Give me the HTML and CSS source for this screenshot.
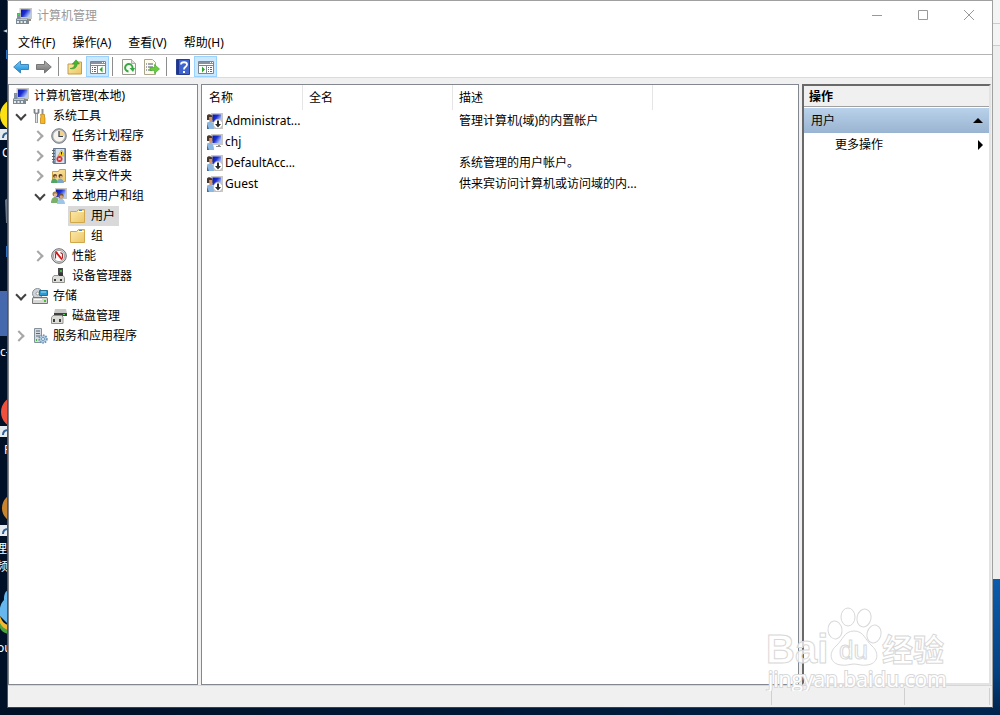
FILE: index.html
```html
<!DOCTYPE html>
<html lang="zh-CN">

<head>
    <meta charset="UTF-8">
    <meta name="viewport" content="width=device-width, initial-scale=1.0">
    <title>计算机管理</title>
    <link rel="stylesheet" href="styles.css">
</head>

<body>
    <!-- icon set -->
    <svg class="sprite" aria-hidden="true">
        <defs>
            <linearGradient id="g-screen" x1="0" y1="0" x2="1" y2="0.6">
                <stop offset="0" stop-color="#0a12a8" />
                <stop offset="0.5" stop-color="#1c30d0" />
                <stop offset="1" stop-color="#b4c8f8" />
            </linearGradient>
            <linearGradient id="g-folder" x1="0" y1="0" x2="1" y2="1">
                <stop offset="0" stop-color="#fdebb4" />
                <stop offset="1" stop-color="#ecc560" />
            </linearGradient>
            <linearGradient id="g-blue" x1="0" y1="0" x2="0" y2="1">
                <stop offset="0" stop-color="#7fd0fa" />
                <stop offset="1" stop-color="#0f87d4" />
            </linearGradient>
            <linearGradient id="g-grey" x1="0" y1="0" x2="0" y2="1">
                <stop offset="0" stop-color="#b5b5b5" />
                <stop offset="1" stop-color="#6e6e6e" />
            </linearGradient>
        </defs>
        <symbol id="i-computer" viewBox="0 0 16 16">
            <path d="M3.500 0H16v11H3.500z" fill="#c9c8c2" />
            <path d="M5 1.500h9.500V9H5z" fill="url(#g-screen)" />
            <path d="M1 5h3.500v6H1z" fill="#8290a0" />
            <path d="M2 6h1v1H2z" fill="#45e05b" />
            <path d="M0 10.500h12l1 1V16H0z" fill="#7b8995" />
            <path d="M1 11h10v1H1z" fill="#c1cad1" />
            <path d="M1 13h2v2H1zM4.500 13h2v2h-2zM8 13h2v2H8z" fill="#e4e9ec" />
            <path d="M12 11h3v2h-3z" fill="#8f8f8a" />
        </symbol>
        <symbol id="i-back" viewBox="0 0 16 16">
            <path d="M.7 8l6.800-6v3.500h8v5h-8V14z" fill="url(#g-blue)" stroke="#3c86bb" />
        </symbol>
        <symbol id="i-forward" viewBox="0 0 16 16">
            <path d="M15.300 8L8.500 2v3.500h-8v5h8V14z" fill="url(#g-grey)" stroke="#777" />
        </symbol>
        <symbol id="i-up" viewBox="0 0 16 16">
            <path d="M1 5h6l1-2h6.500v12H1z" fill="url(#g-folder)" stroke="#c69b45" />
            <path d="M3 9.500C7 9 7.500 7 7.500 5H5.300L9 .8 12.500 5h-2.300C10 9 7 10.500 3 9.500z" fill="#43b72f" stroke="#268e1c" stroke-width=".5" />
        </symbol>
        <symbol id="i-pane-left" viewBox="0 0 16 16">
            <path d="M.5 2.500h15v12H.5z" fill="#fff" stroke="#7d8590" />
            <path d="M1 3h14v2H1z" fill="#8791a0" />
            <path d="M12 3h1v1h-1zM14 3h1v1h-1z" fill="#fff" />
            <path d="M0 6.500h16M7.500 7v7" stroke="#7d8590" />
            <path d="M2 8.500h1M2 10.500h1M2 12.500h1M4 8.500h2M4 10.500h2M4 12.500h2" stroke="#3e6cae" />
            <path d="M12.500 7.500v6l-3-3z" fill="#2ba52b" />
        </symbol>
        <symbol id="i-pane-right" viewBox="0 0 16 16">
            <path d="M.5 2.500h15v12H.5z" fill="#fff" stroke="#7d8590" />
            <path d="M1 3h14v2H1z" fill="#8791a0" />
            <path d="M12 3h1v1h-1zM14 3h1v1h-1z" fill="#fff" />
            <path d="M0 6.500h16M8.500 7v7" stroke="#7d8590" />
            <path d="M10 8.500h1M10 10.500h1M10 12.500h1M12 8.500h2M12 10.500h2M12 12.500h2" stroke="#3e6cae" />
            <path d="M4 7.500v6l3-3z" fill="#2ba52b" />
        </symbol>
        <symbol id="i-refresh" viewBox="0 0 16 16">
            <path d="M1.500.5h9l4 4v11h-13z" fill="#fbfbf5" stroke="#9a9a90" />
            <path d="M10.500.5v4h4" fill="#ddd" stroke="#9a9a90" stroke-width=".7" />
            <path d="M7.500 12.500A3.700 3.700 0 1 1 11.500 9" fill="none" stroke="#36a842" stroke-width="2" />
            <path d="M8.500 9H14l-2 4z" fill="#36a842" />
        </symbol>
        <symbol id="i-export" viewBox="0 0 16 16">
            <path d="M.5.500h8l3 3v12H.5z" fill="#fdfbe9" stroke="#aaa58c" />
            <path d="M2 5h1M2 8h1M2 11h1M4 5h5M4 8h5M4 11h4" stroke="#4c5573" />
            <path d="M6 8.500h4.500V5.500l5 4.500-5 4.500v-3H6z" fill="#68cc3d" stroke="#45a329" stroke-width=".6" />
        </symbol>
        <symbol id="i-help" viewBox="0 0 16 16">
            <path d="M1.500.5h13v15h-13z" fill="#3f64cf" stroke="#263f91" />
            <path d="M2 1h2v14H2z" fill="#1e3690" />
            <path d="M6 5.500C6 2.500 12 2.500 12 5.500 12 8 9 7.500 9 10.500" fill="none" stroke="#fff" stroke-width="1.800" />
            <path d="M8 12h2v2H8z" fill="#fff" />
        </symbol>
        <symbol id="i-tools" viewBox="0 0 16 16">
            <path d="M2.500 1v3.500l2 1.500 2-1.500V1" fill="none" stroke="#7d8386" stroke-width="1.800" />
            <path d="M4.500 5.500V15" stroke="#8a9093" stroke-width="2.800" />
            <path d="M4.500 6V14.500" stroke="#dfe3e4" stroke-width="1" />
            <path d="M9.500 1h2v5h-2z" fill="#8c9499" />
            <path d="M8.500 6.500h4V9l.5 1v5.500H8.500V10l.5-1z" fill="#f5b822" stroke="#b87d10" stroke-width=".7" />
        </symbol>
        <symbol id="i-clock" viewBox="0 0 16 16">
            <circle cx="8" cy="8" r="7.300" fill="#a9afb5" stroke="#7b8086" />
            <circle cx="8" cy="8" r="5.700" fill="#f6f4ec" />
            <path d="M8 2.300A5.700 5.700 0 0 1 13.700 8H8z" fill="#f3d28e" />
            <path d="M8 3v5.500h4" fill="none" stroke="#39424e" stroke-width="1.200" />
        </symbol>
        <symbol id="i-event" viewBox="0 0 16 16">
            <path d="M2.500.5h12v15h-12z" fill="#8fa4bf" stroke="#66778f" />
            <path d="M5 1h8v14H5z" fill="#d6e0ef" />
            <path d="M1 2.500h3M1 5.500h3M1 8.500h3M1 11.500h3M1 14h3" stroke="#5a6673" />
            <path d="M10.500 2l3.500 6H7z" fill="#f8d420" stroke="#a98a14" stroke-width=".5" />
            <path d="M10 4h1v2.500h-1z" fill="#222" />
            <circle cx="8.500" cy="11" r="3" fill="#d92c2c" />
            <path d="M7.300 9.800l2.400 2.400M9.700 9.800l-2.400 2.400" stroke="#fff" />
        </symbol>
        <symbol id="i-share" viewBox="0 0 16 16">
            <path d="M1.500 3.500h6l1-2h6v12h-13z" fill="url(#g-folder)" stroke="#c99f45" />
            <circle cx="4" cy="8" r="2" fill="#6c4428" />
            <circle cx="9.500" cy="8" r="2" fill="#5a3a25" />
            <circle cx="4.500" cy="9" r="1.200" fill="#e0ac80" />
            <circle cx="10" cy="9" r="1.200" fill="#e0ac80" />
            <path d="M0 15c0-6 6-6 7 0z" fill="#52a562" />
            <path d="M6 15c0-6 6-6 7 0z" fill="#7ba6c5" />
        </symbol>
        <symbol id="i-users" viewBox="0 0 16 16">
            <path d="M4 0h12v11H4z" fill="#c9c8c2" />
            <path d="M5 1.500h9.500V9H5z" fill="url(#g-screen)" />
            <circle cx="4" cy="6" r="2.500" fill="#a07d4b" />
            <circle cx="4.500" cy="7" r="1.700" fill="#e5b78c" />
            <circle cx="10" cy="8" r="2.500" fill="#6b523b" />
            <circle cx="10.300" cy="9" r="1.700" fill="#d9a27c" />
            <path d="M0 15c0-8 8-8 8 0z" fill="#7bb06a" />
            <path d="M6 16c0-7 8-7 8 0z" fill="#9cc6e8" />
        </symbol>
        <symbol id="i-folder" viewBox="0 0 16 16">
            <path d="M.5 3.500h6l2-2h6v13H.5z" fill="url(#g-folder)" stroke="#d1a74c" />
            <path d="M8 3.500h6" stroke="#fff" />
            <path d="M9 2.500h3" stroke="#4a90d8" />
        </symbol>
        <symbol id="i-perf" viewBox="0 0 16 16">
            <circle cx="8" cy="8" r="7.300" fill="#dadada" stroke="#6c6c6c" />
            <circle cx="8" cy="8" r="5.600" fill="#fff" stroke="#888" stroke-width=".7" />
            <path d="M4.500 10.500V6l2-1.500M11.500 10.500V6l-2-1.500" fill="none" stroke="#a02a2a" stroke-width="1.200" />
            <path d="M4.500 3.500l6.500 8" stroke="#d51414" stroke-width="1.800" />
        </symbol>
        <symbol id="i-device" viewBox="0 0 16 16">
            <path d="M7 0h5v9H7z" fill="#4b4b4b" />
            <path d="M9 2h2v2H9z" fill="#43b844" />
            <path d="M1.500 9.500l1.500-2h9l1.500 2v5h-12z" fill="#dddddb" stroke="#92928e" />
            <path d="M3 11h2v2H3zM9 11h2v2H9z" fill="#3d3d3d" />
            <path d="M8 5h4v3H8z" fill="#373737" />
        </symbol>
        <symbol id="i-storage" viewBox="0 0 16 16">
            <circle cx="5.500" cy="5.500" r="5" fill="#cdd5d9" stroke="#858e94" />
            <circle cx="5.500" cy="5.500" r="1.500" fill="#fff" stroke="#999" />
            <path d="M7.500 2.500h8v5h-8z" fill="#2d9bd1" stroke="#286e93" />
            <path d="M9 3.500h5v1H9z" fill="#a8def5" />
            <path d="M1 9.500h14l.500 1.500v4.500H.5V11z" fill="#d7d8d6" stroke="#747775" />
            <path d="M2 11.500h8" stroke="#fff" />
            <path d="M12 12h2v2h-2z" fill="#3cc52b" />
        </symbol>
        <symbol id="i-disk" viewBox="0 0 16 16">
            <path d="M4 1h11l1 4H3z" fill="#c7c8c6" />
            <path d="M3 5h13v3H3z" fill="#3e4240" />
            <path d="M12 6h2v1h-2z" fill="#51da54" />
            <path d="M.5 9.500L2 7.500h9l1 2v6H.5z" fill="#deded9" stroke="#92928e" />
            <path d="M2 11h2v3H2zM8 11h2v3H8z" fill="#3d3d3d" />
        </symbol>
        <symbol id="i-services" viewBox="0 0 16 16">
            <path d="M2.500.500h7v14h-7z" fill="#d5dbe0" stroke="#85929c" />
            <path d="M4 3h4M4 5.500h4M4 8h4" stroke="#5c6873" />
            <path d="M4 12h1" stroke="#3cb43a" stroke-width="2" />
            <circle cx="11" cy="11" r="3.800" fill="#b8d4ea" stroke="#6c92b0" stroke-width="1.800" stroke-dasharray="1.500 1" />
            <circle cx="11" cy="11" r="1.500" fill="#fff" stroke="#6c92b0" />
        </symbol>
        <symbol id="i-user" viewBox="0 0 16 16">
            <path d="M4 0h12v11H4z" fill="#c9c8c2" />
            <path d="M5.500 1.500H14V9H5.500z" fill="url(#g-screen)" />
            <path d="M9 12h5v1H9zM11 11h2v1h-2z" fill="#8a8c90" />
            <path d="M0 2.500C1 .5 5 .5 5.500 4v3H0z" fill="#4a382c" />
            <path d="M2 4h3v5H2.500z" fill="#d69467" />
            <path d="M0 16V9.500c4-2 7 0 7 6.500z" fill="#8cb7e2" />
            <path d="M0 16v-5l2 5z" fill="#426d9f" />
        </symbol>
        <symbol id="i-user-off" viewBox="0 0 16 16">
            <path d="M4 0h12v16H7z" fill="#c9c8c2" />
            <use href="#i-user" width="16" height="16" />
            <circle cx="11" cy="11" r="4.700" fill="#fff" stroke="#a9a9a9" stroke-width=".7" />
            <path d="M10 7.500h2V11h2l-3 3.500L8 11h2z" fill="#2b2b2b" />
        </symbol>
    </svg>

    <!-- the part of the desktop that shows left of the window -->
    <svg class="desktop-icons" width="8" height="715" aria-hidden="true">
        <path d="M3 31l5-2v4z" fill="#ccd4dc" />
        <path d="M6 50h2v9H6zM6 246h2v11H6z" fill="#3273c0" />
        <circle cx="16" cy="115" r="16" fill="#fbe111" />
        <path d="M5 200l3-2v25H6z" fill="#6c7988" />
        <path d="M0 291h8v45H0z" fill="#4569ac" />
        <circle cx="17" cy="412" r="16" fill="#f0513c" />
        <circle cx="17" cy="508" r="15" fill="#c98430" />
        <path d="M8 590C4 592 4 597 4 600c-4 4-5 10-4 16l8 8z" fill="#65b7ee" />
        <path d="M0 616c2 6 5 8 8 9v8c-4-1-7-4-8-8z" fill="#f5b72b" />
        <path d="M0 623c2 4 5 6 8 7v4c-4-1-7-3-8-6z" fill="#4aa33f" />
        <path d="M0 129h8v11H0zM0 426h8v11H0zM0 525h8v11H0z" fill="#e6ebf0" />
        <path d="M3 138c0-4 2-5 5-5M3 435c0-4 2-5 5-5M3 534c0-4 2-5 5-5" fill="none" stroke="#2c5f98" stroke-width="2" />
        <g class="desktop-label">
            <text x="2" y="157">C</text>
            <text x="0" y="356">c-</text>
            <text x="4" y="454">F</text>
            <text x="-5" y="553">理</text>
            <text x="-4" y="571">频</text>
            <text x="-3" y="652">ou</text>
        </g>
    </svg>

    <div class="window">
        <header class="title-bar">
            <svg class="icon"><use href="#i-computer" /></svg>
            <h1>计算机管理</h1>
            <div class="window-buttons">
                <button type="button" aria-label="最小化"><svg viewBox="0 0 12 12"><path d="M1 5.500h10" /></svg></button>
                <button type="button" aria-label="最大化"><svg viewBox="0 0 12 12"><path d="M1.500.5h9v9h-9z" /></svg></button>
                <button type="button" aria-label="关闭"><svg viewBox="0 0 12 12"><path d="M1 0l10 10M11 0L1 10" /></svg></button>
            </div>
        </header>

        <nav class="menu-bar">
            <button type="button">文件(F)</button>
            <button type="button">操作(A)</button>
            <button type="button">查看(V)</button>
            <button type="button">帮助(H)</button>
        </nav>

        <div class="tool-bar">
            <button type="button" aria-label="后退"><svg class="icon"><use href="#i-back" /></svg></button>
            <button type="button" aria-label="前进"><svg class="icon"><use href="#i-forward" /></svg></button>
            <span class="sep"></span>
            <button type="button" aria-label="上移一级"><svg class="icon"><use href="#i-up" /></svg></button>
            <button type="button" class="on" aria-label="显示控制台树"><svg class="icon"><use href="#i-pane-left" /></svg></button>
            <span class="sep"></span>
            <button type="button" aria-label="刷新"><svg class="icon"><use href="#i-refresh" /></svg></button>
            <button type="button" aria-label="导出列表"><svg class="icon"><use href="#i-export" /></svg></button>
            <span class="sep"></span>
            <button type="button" aria-label="帮助"><svg class="icon"><use href="#i-help" /></svg></button>
            <button type="button" class="on" aria-label="显示操作窗格"><svg class="icon"><use href="#i-pane-right" /></svg></button>
        </div>

        <main class="panes">
            <section class="pane tree">
                <div class="row"><span class="node"><svg class="icon"><use href="#i-computer" /></svg>计算机管理(本地)</span></div>
                <ul>
                    <li>
                        <div class="row"><button type="button" class="toggle open" aria-label="折叠"></button><span class="node"><svg class="icon"><use href="#i-tools" /></svg>系统工具</span></div>
                        <ul>
                            <li class="row"><button type="button" class="toggle" aria-label="展开"></button><span class="node"><svg class="icon"><use href="#i-clock" /></svg>任务计划程序</span></li>
                            <li class="row"><button type="button" class="toggle" aria-label="展开"></button><span class="node"><svg class="icon"><use href="#i-event" /></svg>事件查看器</span></li>
                            <li class="row"><button type="button" class="toggle" aria-label="展开"></button><span class="node"><svg class="icon"><use href="#i-share" /></svg>共享文件夹</span></li>
                            <li>
                                <div class="row"><button type="button" class="toggle open" aria-label="折叠"></button><span class="node"><svg class="icon"><use href="#i-users" /></svg>本地用户和组</span></div>
                                <ul>
                                    <li class="row leaf"><span class="node selected"><svg class="icon"><use href="#i-folder" /></svg>用户</span></li>
                                    <li class="row leaf"><span class="node"><svg class="icon"><use href="#i-folder" /></svg>组</span></li>
                                </ul>
                            </li>
                            <li class="row"><button type="button" class="toggle" aria-label="展开"></button><span class="node"><svg class="icon"><use href="#i-perf" /></svg>性能</span></li>
                            <li class="row leaf"><span class="node"><svg class="icon"><use href="#i-device" /></svg>设备管理器</span></li>
                        </ul>
                    </li>
                    <li>
                        <div class="row"><button type="button" class="toggle open" aria-label="折叠"></button><span class="node"><svg class="icon"><use href="#i-storage" /></svg>存储</span></div>
                        <ul>
                            <li class="row leaf"><span class="node"><svg class="icon"><use href="#i-disk" /></svg>磁盘管理</span></li>
                        </ul>
                    </li>
                    <li class="row"><button type="button" class="toggle" aria-label="展开"></button><span class="node"><svg class="icon"><use href="#i-services" /></svg>服务和应用程序</span></li>
                </ul>
            </section>

            <section class="pane list">
                <table>
                    <thead>
                        <tr>
                            <th class="c-name">名称</th>
                            <th class="c-full">全名</th>
                            <th class="c-desc">描述</th>
                        </tr>
                    </thead>
                    <tbody>
                        <tr>
                            <td><svg class="icon"><use href="#i-user-off" /></svg>Administrat...</td>
                            <td></td>
                            <td>管理计算机(域)的内置帐户</td>
                        </tr>
                        <tr>
                            <td><svg class="icon"><use href="#i-user" /></svg>chj</td>
                            <td></td>
                            <td></td>
                        </tr>
                        <tr>
                            <td><svg class="icon"><use href="#i-user-off" /></svg>DefaultAcc...</td>
                            <td></td>
                            <td>系统管理的用户帐户。</td>
                        </tr>
                        <tr>
                            <td><svg class="icon"><use href="#i-user-off" /></svg>Guest</td>
                            <td></td>
                            <td>供来宾访问计算机或访问域的内...</td>
                        </tr>
                    </tbody>
                </table>
            </section>

            <aside class="actions">
                <h2>操作</h2>
                <button type="button" class="group">用户<span class="arrow up"></span></button>
                <button type="button" class="more">更多操作<span class="arrow right"></span></button>
            </aside>
        </main>

        <footer class="status-bar">
            <span class="s-main"></span>
            <span class="s-mid"></span>
            <span class="s-end"></span>
        </footer>
    </div>

    <svg class="watermark" width="190" height="92" viewBox="0 0 190 92">
        <g>
            <ellipse cx="86" cy="18" rx="7" ry="9" />
            <ellipse cx="102" cy="19" rx="7" ry="9" transform="rotate(12 102 19)" />
            <ellipse cx="73" cy="31" rx="7" ry="9" transform="rotate(-8 73 31)" />
            <ellipse cx="112" cy="35" rx="7" ry="9" transform="rotate(14 112 35)" />
            <path d="M92 32c-10 0-11 9-18 15-8 7-6 18 5 19 5 1 9-1 13-1s8 2 13 1c11-1 13-12 5-19-7-6-8-15-18-15z" />
        </g>
        <text class="wm-bai" x="4" y="64">Bai</text>
        <text class="wm-du" x="77" y="60">du</text>
        <text class="wm-jy" x="120" y="62">经验</text>
        <text class="wm-url" x="6" y="88">jingyan.baidu.com</text>
    </svg>
</body>

</html>
```
FILE: styles.css
```css
* {
    box-sizing: border-box;
}

body {
    margin: 0;
    height: 100vh;
    padding: 0 7px 7px;
    overflow: hidden;
    position: relative;
    font-family: "Noto Sans", "Noto Sans CJK SC", sans-serif;
    font-size: 12px;
    line-height: 20px;
    color: #000;
    background:
        linear-gradient(#f4f4f4 0 23px, #ccc 23px 24px, #f4f4f4 24px 45px, #ccc 45px 46px, #eee 46px) right top / 7px 579px no-repeat,
        linear-gradient(#0a5cad, #04407f 70%, #00234b) right bottom / 7px calc(100% - 579px) no-repeat,
        linear-gradient(90deg, #001026, #001a3a 60%, #00264f);
}

button {
    margin: 0;
    padding: 0;
    border: 0;
    background: none;
    font: inherit;
    color: inherit;
}

h1,
h2 {
    margin: 0;
    font-size: 12px;
    font-weight: normal;
}

ul {
    list-style: none;
    margin: 0;
    padding: 0;
}

.sprite {
    position: absolute;
    width: 0;
    height: 0;
}

.icon {
    width: 16px;
    height: 16px;
    flex: none;
}

.desktop-icons {
    position: absolute;
    left: 0;
    top: 0;
}

.desktop-label {
    fill: #fff;
    font-size: 12px;
}

.window {
    position: relative;
    height: 100%;
    display: flex;
    flex-direction: column;
    background: #f0f0f0;
    border: 1px solid #a0a0a0;
    border-left-color: #4d5564;
    border-bottom-color: #36434f;
}

/* title, menu and tool bar */
.title-bar {
    height: 30px;
    padding-left: 8px;
    display: flex;
    align-items: center;
    gap: 5px;
    background: #fff;
    color: #999;
}

.window-buttons {
    margin-left: auto;
    height: 100%;
    display: flex;
}

.window-buttons button {
    width: 46px;
    display: flex;
    align-items: center;
    justify-content: center;
}

.window-buttons svg {
    width: 12px;
    height: 12px;
    fill: none;
    stroke: #999;
}

.menu-bar {
    height: 24px;
    padding-left: 10px;
    display: flex;
    gap: 17px;
    background: #fff;
    border-bottom: 1px solid #b4b4b4;
}

.tool-bar {
    height: 23px;
    padding: 1px 0 0 1px;
    display: flex;
    background: #fff;
    border-bottom: 1px solid #dcdcdc;
}

.tool-bar button {
    width: 23px;
    display: flex;
    align-items: center;
    justify-content: center;
}

.tool-bar .on {
    background: #cce8ff;
    border: 1px solid #99d1ff;
}

.tool-bar .sep {
    width: 1px;
    margin: 1px 4px 1px 3px;
    background: #8d8d8d;
}

/* the three panes */
.panes {
    flex: 1;
    min-height: 0;
    display: flex;
    gap: 3px;
    padding: 6px 1px 0 0;
}

.pane {
    background: #fff;
    border: 1px solid #828790;
}

.tree {
    width: 190px;
    padding: 1px 2px;
}

.tree > ul {
    padding-left: 2px;
}

.tree ul ul {
    padding-left: 19px;
}

.row {
    height: 20px;
    display: flex;
}

.leaf {
    padding-left: 17px;
}

.node {
    display: flex;
    align-items: center;
    gap: 5px;
    padding: 0 4px 0 2px;
    white-space: nowrap;
}

.selected {
    background: #d9d9d9;
}

.toggle {
    width: 16px;
    margin-right: 1px;
    padding-right: 4px;
    display: flex;
    align-items: center;
    justify-content: center;
}

.toggle::before {
    content: "";
    width: 6px;
    height: 6px;
    border: solid #a6a6a6;
    border-width: 2px 2px 0 0;
    transform: rotate(45deg);
}

.toggle.open {
    padding: 0 1px 3px 0;
}

.toggle.open::before {
    border-color: #404040;
    transform: rotate(135deg);
}

.list {
    flex: 1;
    min-width: 0;
}

.list table {
    border-spacing: 0;
    table-layout: fixed;
    width: 451px;
}

.list th {
    height: 25px;
    padding: 0 6px;
    text-align: left;
    font-weight: normal;
    border-right: 1px solid #e5e5e5;
}

.list th:first-child {
    padding-left: 7px;
}

.c-name {
    width: 101px;
}

.c-full {
    width: 150px;
}

.c-desc {
    width: 200px;
}

.list td {
    height: 21px;
    padding: 0 6px;
    white-space: nowrap;
}

.list td:first-child {
    padding: 0 0 0 5px;
}

.list td .icon {
    margin-right: 2px;
    vertical-align: middle;
}

.actions {
    width: 189px;
    background: #fff;
    border: 2px solid;
    border-color: #696969 #e3e3e3 #e3e3e3 #696969;
    display: flex;
    flex-direction: column;
}

.actions h2 {
    height: 21px;
    padding-left: 5px;
    line-height: 21px;
    font-weight: bold;
    background: #f0f0f0;
    border-bottom: 1px solid #a0a0a0;
}

.actions button {
    display: flex;
    align-items: center;
    justify-content: space-between;
    padding-right: 6px;
}

.actions .group {
    height: 25px;
    margin-top: 1px;
    padding-left: 7px;
    background: linear-gradient(#b9d1ea, #99b4d1);
}

.actions .more {
    height: 24px;
    padding-left: 31px;
}

.arrow {
    border: 5px solid transparent;
}

.arrow.up {
    border-top: 0;
    border-bottom-color: #000;
}

.arrow.right {
    border-right: 0;
    border-left-color: #000;
}

.status-bar {
    height: 22px;
    padding-right: 2px;
    display: flex;
    border-top: 1px solid #d7d7d7;
}

.status-bar span {
    margin: 2px 0;
    border-right: 1px solid #d0d0d0;
}

.s-main {
    flex: 1;
}

.s-mid {
    width: 133px;
}

.s-end {
    width: 85px;
}

/* watermark over the lower right corner */
.watermark {
    position: absolute;
    right: 48px;
    bottom: 24px;
    fill: #fff;
    fill-opacity: 0.75;
    stroke: #d8d8d8;
    pointer-events: none;
}

.watermark text {
    font-family: "Liberation Sans", "Noto Sans CJK SC", sans-serif;
    font-weight: bold;
}

.wm-bai {
    font-size: 40px;
}

.watermark .wm-du {
    font-size: 26px;
    font-weight: normal;
}

.wm-jy {
    font-size: 31px;
}

.watermark .wm-url {
    font-family: "Open Sans", sans-serif;
    font-size: 21px;
    font-weight: normal;
    paint-order: stroke;
    stroke-width: 2px;
    fill-opacity: 1;
}
```
